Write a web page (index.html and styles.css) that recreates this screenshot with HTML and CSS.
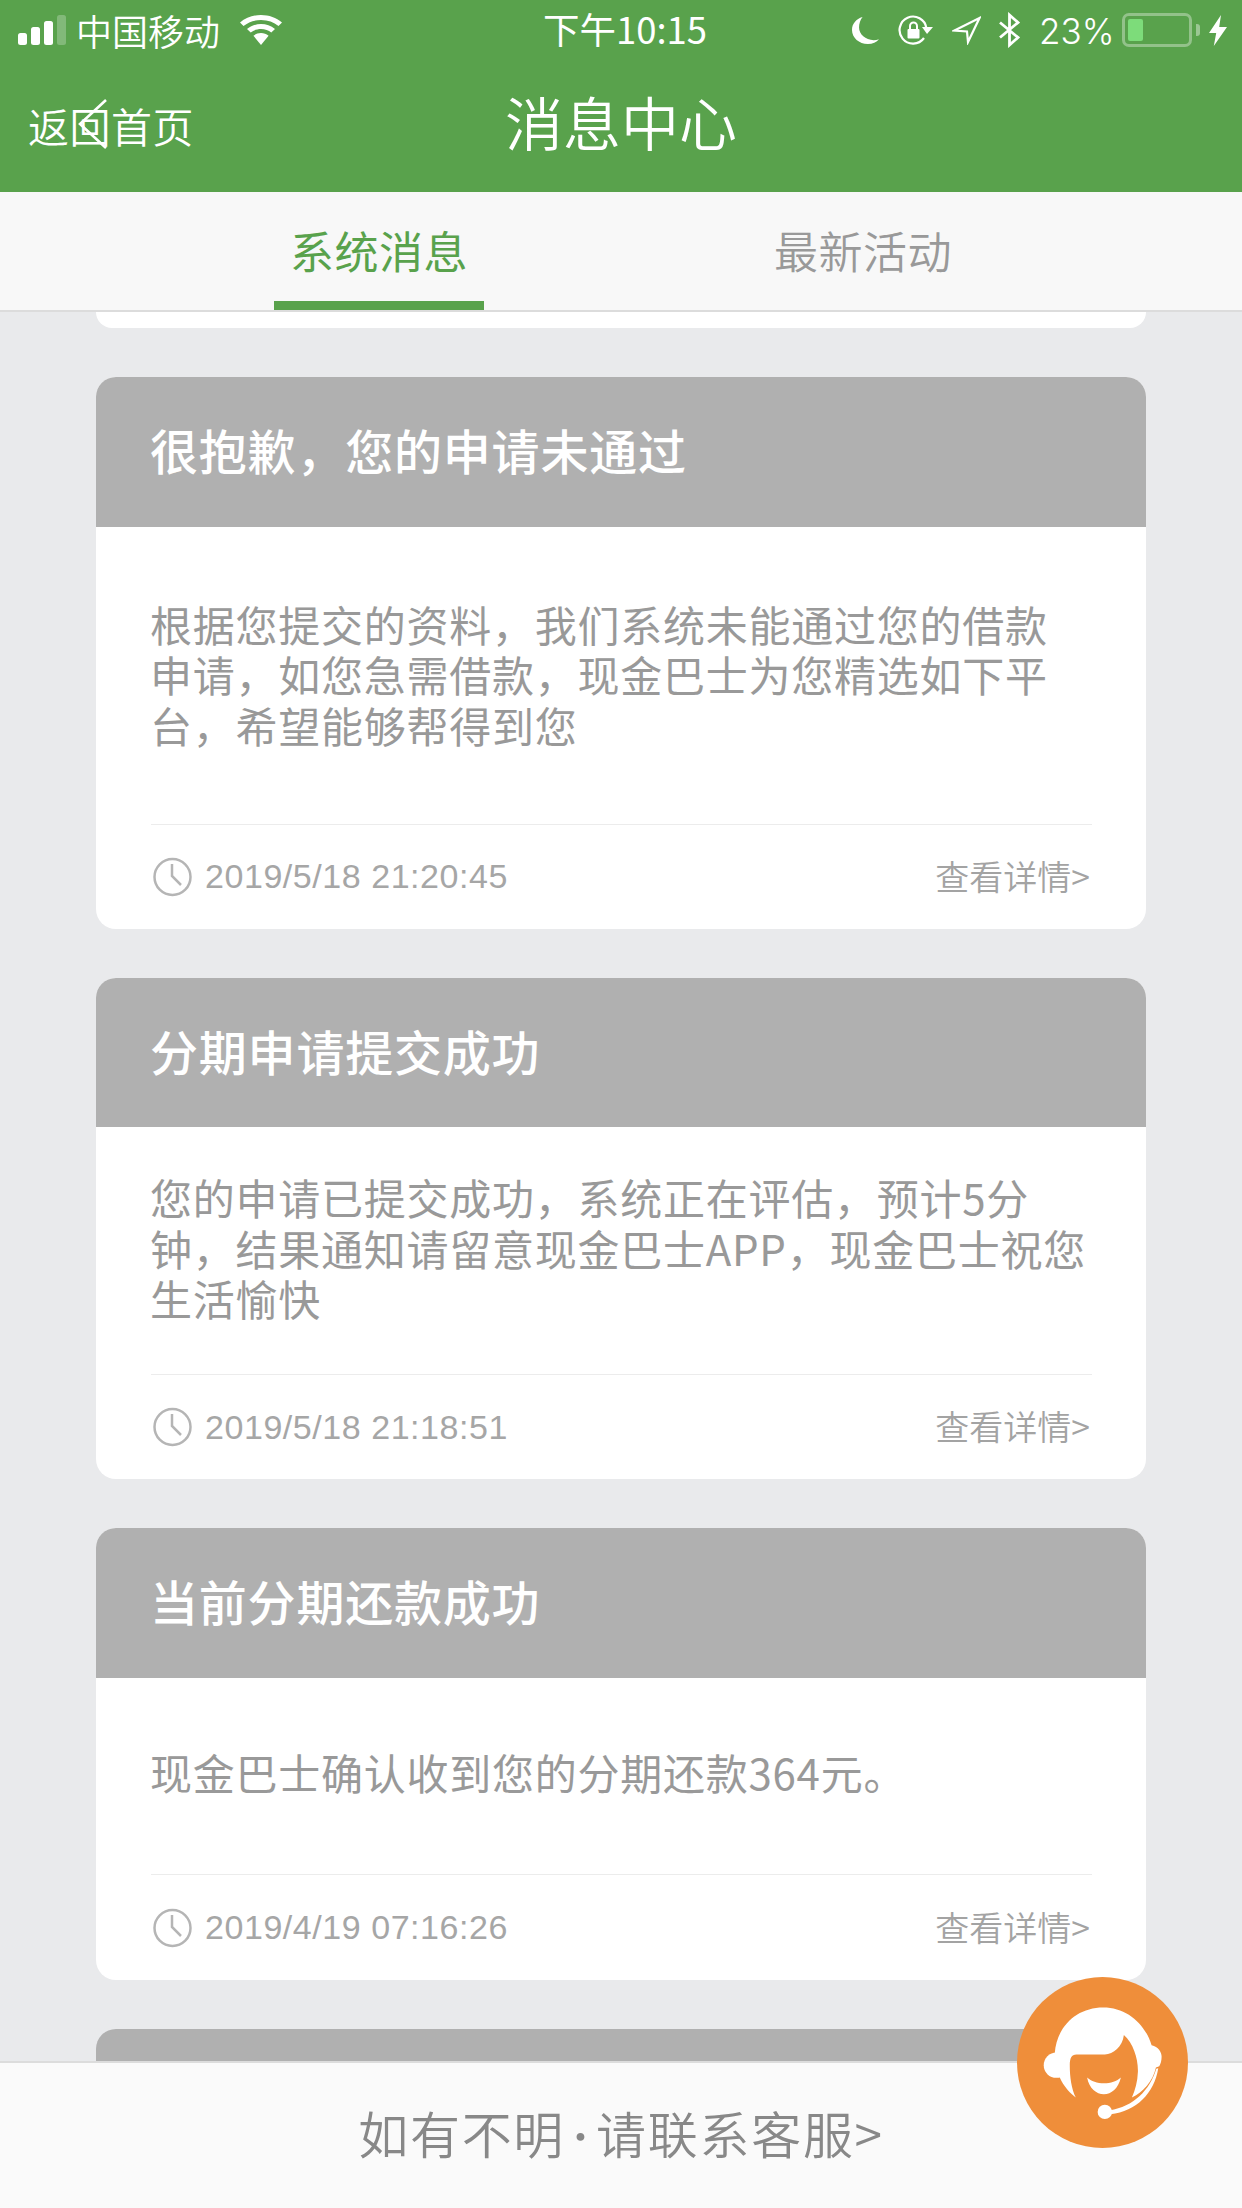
FILE: index.html
```html
<!DOCTYPE html>
<html lang="zh-CN">
<head>
<meta charset="utf-8">
<title>消息中心</title>
<link rel="stylesheet" href="styles.css">
</head>
<body>
<div class="app">
  <div class="topbar">
    <div class="status">
      <div class="status-left">
        <div class="signal"><i class="b1"></i><i class="b2"></i><i class="b3"></i><i class="b4"></i></div>
        <span class="carrier">中国移动</span>
        <svg class="wifi" viewBox="0 0 36 30" preserveAspectRatio="none"><path fill="#fff" d="M18 0C11 0 5 2.700 0 7.500L3 11C7 7.200 12 5 18 5S29 7.200 33 11L36 7.500C31 2.700 25 0 18 0Z"/><path fill="#fff" d="M18 9C13.500 9 9.500 10.800 6 14L9.200 17.500C11.500 15.300 14.500 14 18 14S24.500 15.300 26.800 17.500L30 14C26.500 10.800 22.500 9 18 9Z"/><path fill="#fff" d="M18 18C15.500 18 13.500 19 11.500 20.700L18 30L24.500 20.700C22.500 19 20.500 18 18 18Z"/></svg>
      </div>
      <div class="clock-time">下午10:15</div>
      <div class="status-right">
        <svg class="moon" viewBox="0 0 23 28" preserveAspectRatio="none"><path fill="#fff" d="M9 0C3.500 2 0 7 0 13.500C0 21.500 6 28 13.500 28C17.500 28 21 26 23 23C21.500 23.700 20 24 18.500 24C11.500 24 6 18 6 11C6 7 7 3 9 0Z"/></svg>
        <svg class="rotlock" viewBox="0 0 35 30"><path fill="none" stroke="#fff" stroke-width="2.200" d="M26 23A13.500 13.500 0 1 1 28.400 13"/><path fill="#fff" d="M24 12H35L29 19Z"/><rect x="9.500" y="14" width="12" height="9.500" rx="1" fill="#fff"/><path fill="none" stroke="#fff" stroke-width="2" d="M12 15V11A3.500 3.500 0 0 1 19 11V15"/></svg>
        <svg class="loc" viewBox="0 0 29 29"><path fill="none" stroke="#fff" stroke-width="2.200" d="M27.500 2L2.500 14.500L15 15.500L16 26Z"/></svg>
        <svg class="bt" viewBox="0 0 21 36"><path fill="none" stroke="#fff" stroke-width="2.800" d="M1 10.500L19 25.500L10.500 33V3L19 10.500L1 25.500"/></svg>
        <span class="pct">23%</span>
        <div class="battery"><div class="battery-fill"></div></div>
        <div class="battery-nub"></div>
        <svg class="bolt" viewBox="0 0 15 31" preserveAspectRatio="none"><path fill="#fff" d="M10 0L0 18H6L4 31L15 12H8.500Z"/></svg>
      </div>
    </div>
    <header class="nav">
      <a class="back">返回首页</a>
      <h1 class="title">消息中心</h1>
      <span class="nav-spacer"></span>
      <svg class="chevron" viewBox="0 0 29 50"><path fill="none" stroke="#fff" stroke-width="2.600" d="M28 1L2 25L28 49"/></svg>
    </header>
  </div>

  <nav class="tabs">
    <div class="tab tab-active">系统消息</div>
    <div class="tab">最新活动</div>
  </nav>

  <main class="list">
    <div class="card-tail"></div>

    <article class="card">
      <h2 class="card-head">很抱歉，您的申请未通过</h2>
      <div class="card-body roomy">
        <p>根据您提交的资料，我们系统未能通过您的借款申请，如您急需借款，现金巴士为您精选如下平台，希望能够帮得到您</p>
      </div>
      <div class="card-foot">
        <div class="stamp">
          <svg class="clock" viewBox="0 0 39 40"><circle cx="19.500" cy="20" r="18" fill="none" stroke="#b5b5b5" stroke-width="2.500"/><path fill="none" stroke="#b5b5b5" stroke-width="2.500" d="M19 7V19L28 28"/></svg>
          <span>2019/5/18 21:20:45</span>
        </div>
        <a class="more">查看详情&gt;</a>
      </div>
    </article>

    <article class="card">
      <h2 class="card-head">分期申请提交成功</h2>
      <div class="card-body">
        <p>您的申请已提交成功，系统正在评估，预计5分钟，结果通知请留意现金巴士APP，现金巴士祝您生活愉快</p>
      </div>
      <div class="card-foot">
        <div class="stamp">
          <svg class="clock" viewBox="0 0 39 40"><circle cx="19.500" cy="20" r="18" fill="none" stroke="#b5b5b5" stroke-width="2.500"/><path fill="none" stroke="#b5b5b5" stroke-width="2.500" d="M19 7V19L28 28"/></svg>
          <span>2019/5/18 21:18:51</span>
        </div>
        <a class="more">查看详情&gt;</a>
      </div>
    </article>

    <article class="card">
      <h2 class="card-head">当前分期还款成功</h2>
      <div class="card-body single">
        <p>现金巴士确认收到您的分期还款364元。</p>
      </div>
      <div class="card-foot">
        <div class="stamp">
          <svg class="clock" viewBox="0 0 39 40"><circle cx="19.500" cy="20" r="18" fill="none" stroke="#b5b5b5" stroke-width="2.500"/><path fill="none" stroke="#b5b5b5" stroke-width="2.500" d="M19 7V19L28 28"/></svg>
          <span>2019/4/19 07:16:26</span>
        </div>
        <a class="more">查看详情&gt;</a>
      </div>
    </article>

    <article class="card">
      <h2 class="card-head">&nbsp;</h2>
    </article>
  </main>

  <footer class="help">如有不明<span class="help-dot">·</span>请联系客服&gt;</footer>

  <svg class="agent" viewBox="352 111 512 512">
    <circle cx="608" cy="367" r="256" fill="#ef8e3a"/>
    <circle cx="470" cy="375" r="38" fill="#fff"/>
    <path fill="#fff" d="M465 340C470 260 530 202 610 202C680 202 735 250 755 315C775 320 785 335 785 350C785 362 782 372 778 378L768 382C758 425 730 455 696 472C706 450 713 425 714 395C715 355 700 310 672 285C668 320 640 343 615 343L530 343C515 343 510 355 510 375C510 410 515 445 528 472C495 445 468 410 465 340Z"/>
    <path fill="#fff" d="M562 412C585 435 640 435 663 412C655 445 635 462 612 462C590 462 568 445 562 412Z"/>
    <path fill="#fff" d="M775 384C762 460 710 512 632 522L630 510C700 500 750 450 769 386Z"/>
    <circle cx="615" cy="515" r="21.500" fill="#fff"/>
  </svg>
</div>
</body>
</html>
```
FILE: styles.css
```css
* { box-sizing: border-box; }
html, body { margin: 0; padding: 0; }
body { width: 1242px; height: 2208px; overflow: hidden; font-family: "Noto Sans CJK SC", "Liberation Sans", sans-serif; background: #e9eaec; }
h1, h2, p { margin: 0; font-weight: 400; }
.app { position: relative; width: 1242px; height: 2208px; display: flex; flex-direction: column; overflow: hidden; }

.topbar { background: #59a24c; height: 192px; color: #fff; flex: none; }
.status { height: 60px; padding: 0 15px 0 18px; display: grid; grid-template-columns: 1fr auto 1fr; align-items: center; }
.status-left { display: flex; align-items: center; }
.signal { display: flex; align-items: flex-end; gap: 4px; height: 30px; width: 48px; flex: none; }
.signal i { display: block; width: 9px; background: #fff; border-radius: 2.500px; }
.signal .b1 { height: 12px; }
.signal .b2 { height: 18px; }
.signal .b3 { height: 24px; }
.signal .b4 { height: 30px; background: rgba(255,255,255,.25); }
.carrier { font-size: 36px; line-height: 40px; margin-left: 10px; width: 144px; font-weight: 350; white-space: nowrap; flex: none; }
.wifi { width: 42px; height: 30px; margin-left: 20px; flex: none; }
.clock-time { font-size: 36.500px; line-height: 40px; margin-left: 5px; margin-top: -2px; white-space: nowrap; }
.status-right { display: flex; align-items: center; justify-self: end; }
.moon { width: 27px; height: 27px; }
.rotlock { width: 35px; height: 30px; margin-left: 19px; }
.loc { width: 29px; height: 29px; margin-left: 19px; }
.bt { width: 21px; height: 36px; margin-left: 18px; }
.pct { font-family: "Inter", "Liberation Sans", sans-serif; font-weight: 300; font-size: 35px; line-height: 40px; margin-left: 19px; margin-top: 2px; width: 72px; white-space: nowrap; }
.battery { width: 70px; height: 34px; margin-left: 11px; border: 3px solid rgba(255,255,255,.35); border-radius: 7px; padding: 3px; }
.battery-fill { width: 15px; height: 100%; background: #7ddc7a; border-radius: 2px; }
.battery-nub { width: 4px; height: 12px; margin-left: 4px; background: rgba(255,255,255,.4); border-radius: 0 3px 3px 0; }
.bolt { width: 18px; height: 31px; margin-left: 9px; }

.nav { position: relative; height: 132px; display: grid; grid-template-columns: 1fr auto 1fr; align-items: center; padding: 0 28px; }
.back { font-size: 41px; line-height: 60px; letter-spacing: .5px; font-weight: 350; margin-top: -2px; }
.title { font-size: 58px; line-height: 70px; font-weight: 350; margin-top: -11px; }
.chevron { position: absolute; left: 78px; top: 39px; width: 29px; height: 50px; }

.tabs { flex: none; height: 120px; background: #f8f8f8; border-bottom: 2px solid #dcdcdc; display: flex; padding-left: 274px; gap: 274px; }
.tab { width: 210px; height: 118px; text-align: center; font-size: 44px; letter-spacing: .5px; line-height: 116px; color: #999; font-weight: 350; }
.tab-active { color: #59a24c; border-bottom: 9px solid #59a24c; font-weight: 400; }

.list { flex: 1; min-height: 0; overflow: hidden; padding: 0 96px; display: flex; flex-direction: column; gap: 49px; }
.card-tail { flex: none; height: 16.300px; background: #fff; border-radius: 0 0 20px 20px; }
.card { flex: none; background: #fff; border-radius: 20px; overflow: hidden; }
.card-head { height: 149.400px; background: #b0b0b0; color: #fff; font-size: 48px; line-height: 145.400px; padding-left: 54px; letter-spacing: .8px; font-weight: 500; }
.card-body { padding: 45px 57px 50.100px 54px; font-size: 42px; line-height: 50.500px; color: #999; letter-spacing: .75px; font-weight: 350; }
.card-body.roomy { padding-top: 72px; padding-bottom: 73.400px; }
.card-body.single { padding-top: 69px; padding-bottom: 77.100px; }
.card-foot { height: 105.400px; margin: 0 54px 0 55px; border-top: 1px solid #ececec; display: flex; justify-content: space-between; align-items: center; }
.stamp { display: flex; align-items: center; gap: 13px; padding-left: 2px; color: #a6a6a6; font-family: "Liberation Sans", sans-serif; font-size: 34px; letter-spacing: .55px; }
.clock { width: 39px; height: 40px; flex: none; }
.more { font-size: 34px; color: #a3a3a3; margin-right: 2px; margin-top: -3px; font-weight: 350; }

.help { flex: none; height: 147px; background: #fafafa; border-top: 2px solid #dcdcdc; text-align: center; color: #888; font-size: 50px; letter-spacing: 1.700px; line-height: 139px; font-weight: 350; }
.help-dot { display: inline-block; width: 31px; text-align: center; letter-spacing: 0; font-family: "Inter", sans-serif; font-weight: 600; }
.agent { position: absolute; left: 1017px; top: 1977px; width: 171px; height: 171px; }
```
